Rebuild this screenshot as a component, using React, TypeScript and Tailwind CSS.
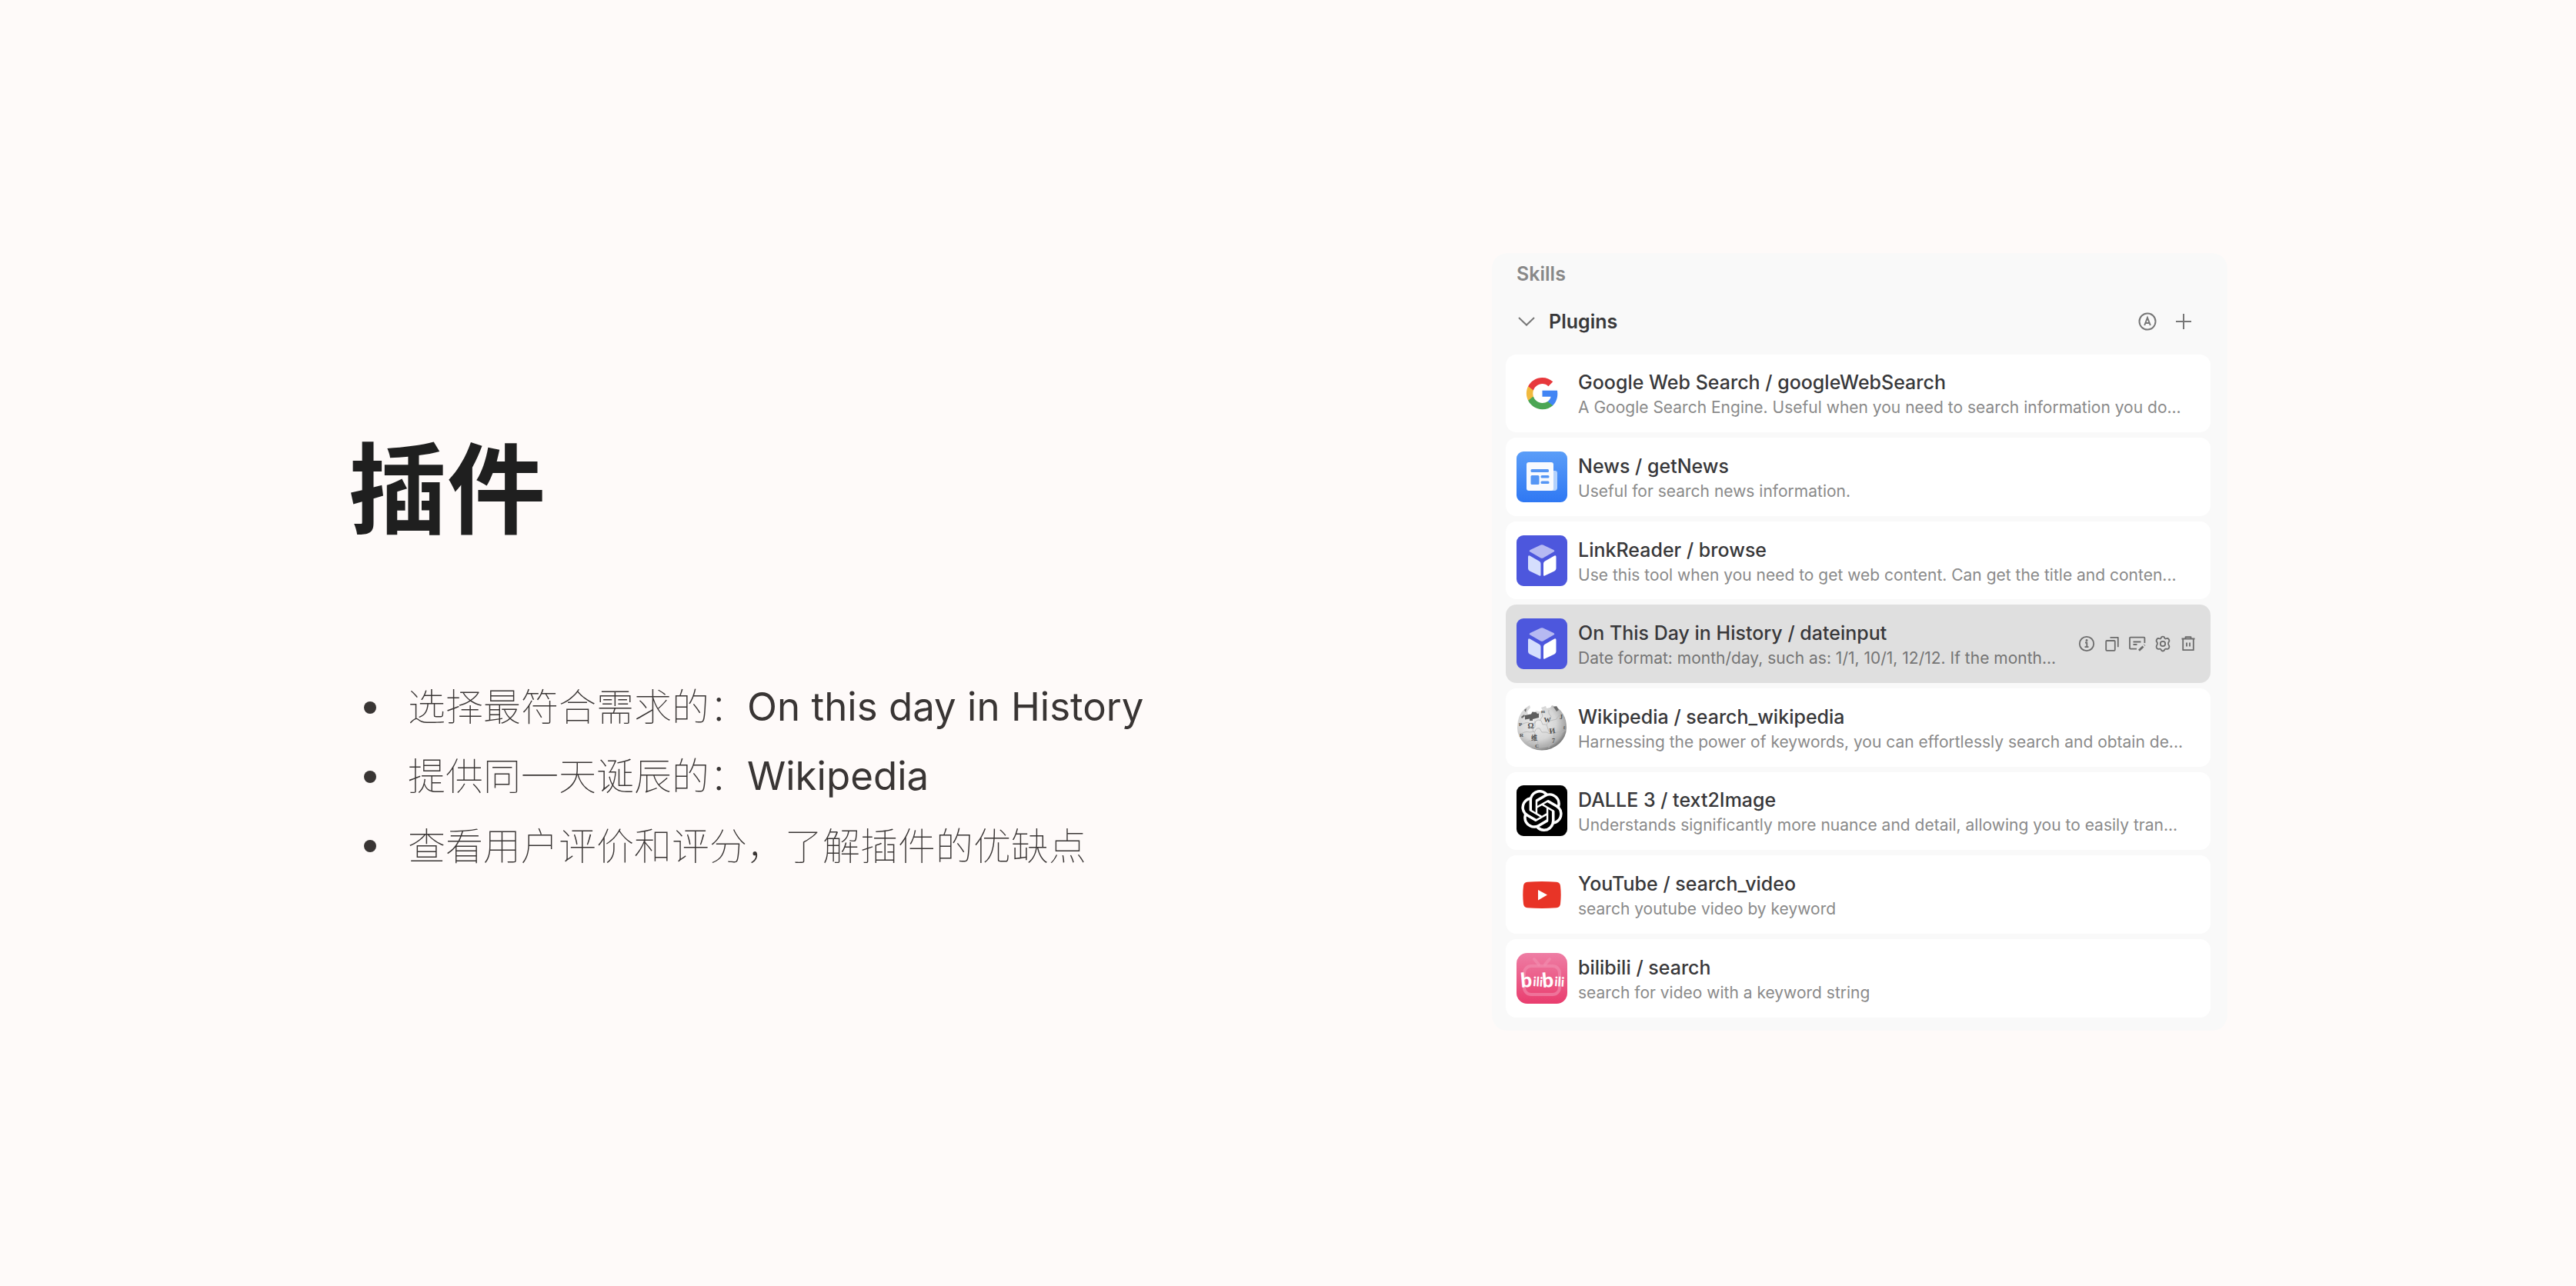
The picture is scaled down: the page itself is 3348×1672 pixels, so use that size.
import type { ReactNode } from 'react'
import { SiOpenai } from 'react-icons/si'

interface Plugin {
  name: string
  description: string
  icon: ReactNode
  active?: boolean
}

function GoogleIcon() {
  return (
    <svg viewBox="0 0 24 24" className="size-[45px]">
      <path fill="#4285F4" d="M22.56 12.25c0-.78-.07-1.53-.2-2.25H12v4.26h5.92c-.26 1.37-1.04 2.53-2.21 3.31v2.77h3.57c2.08-1.92 3.28-4.74 3.28-8.09z" />
      <path fill="#4BA654" d="M12 23c2.97 0 5.46-.98 7.28-2.66l-3.57-2.77c-.98.66-2.23 1.06-3.71 1.06-2.86 0-5.29-1.93-6.16-4.53H2.18v2.84C3.99 20.53 7.7 23 12 23z" />
      <path fill="#F1B93E" d="M5.84 14.09c-.22-.66-.35-1.36-.35-2.09s.13-1.43.35-2.09V7.07H2.18C1.43 8.55 1 10.22 1 12s.43 3.45 1.18 4.93l2.85-2.22.81-.62z" />
      <path fill="#E7383C" d="M12 5.38c1.62 0 3.06.56 4.21 1.64l3.15-3.15C17.45 2.09 14.97 1 12 1 7.7 1 3.99 3.47 2.18 7.07l3.66 2.84c.87-2.6 3.3-4.53 6.16-4.53z" />
    </svg>
  )
}

function NewsIcon() {
  return (
    <svg viewBox="0 0 66 66" className="size-full">
      <defs>
        <linearGradient id="news-bg" x1="0" y1="0" x2="0" y2="1">
          <stop offset="0" stopColor="#5A9DF8" />
          <stop offset="1" stopColor="#2F78F3" />
        </linearGradient>
      </defs>
      <rect width="66" height="66" rx="9" fill="url(#news-bg)" />
      <path d="M46 25h4a3 3 0 0 1 3 3v19a4 4 0 0 1-4 4h-5z" fill="#B4D2FC" />
      <rect x="13" y="14" width="35" height="37" rx="3" fill="#F8FAFE" />
      <g fill="#5596F5">
        <rect x="18.500" y="23" width="23.500" height="4" rx="1.500" />
        <rect x="18.500" y="31" width="11" height="12" rx="1.500" />
        <rect x="31.500" y="31" width="11" height="3.500" rx="1.500" />
        <rect x="31.500" y="38.500" width="11" height="3.500" rx="1.500" />
      </g>
    </svg>
  )
}

function CubeIcon() {
  return (
    <svg viewBox="0 0 66 66" className="size-full">
      <rect width="66" height="66" rx="9" fill="#4D57DD" />
      <path d="M31.500 12.600q1.500-.7 3 0l13.800 6.400q2 1.300 0 2.600l-13.800 7.800q-1.500.9-3 0l-13.800-7.800q-2-1.300 0-2.600z" fill="#B6B9F2" />
      <path d="M15 28q0-2.500 2.200-1.400l12.600 7.200q1.700 1 1.700 3v14.700q0 1.800-1.700 1.100l-12.600-6q-2.200-1.200-2.200-3.600z" fill="#D5DEFD" />
      <path d="M51.500 28q0-2.500-2.200-1.400l-12.600 7.200q-1.700 1-1.700 3v14.700q0 1.800 1.700 1.100l12.600-6q2.200-1.200 2.200-3.600z" fill="#fff" />
    </svg>
  )
}

function WikipediaIcon() {
  return (
    <svg viewBox="0 0 66 66" className="size-full">
      <defs>
        <radialGradient id="globe" cx=".4" cy=".38" r=".64">
          <stop offset="0" stopColor="#EDEDED" />
          <stop offset=".6" stopColor="#D6D6D6" />
          <stop offset=".88" stopColor="#ABABAB" />
          <stop offset="1" stopColor="#7A7A7A" />
        </radialGradient>
      </defs>
      <path
        d="M11 8l6-4 1 3-4 5 1 4 8-2 2-3 5 1 4-1-2-4 6-2 1 3 5-1 2-3q7 2 11.500 7Q65 19.500 65 33A32 29.500 0 0 1 1 33Q1 17 11 8z"
        fill="url(#globe)"
      />
      <path d="M11 17l8-1.500 1.500-3 5 .5 1.500 2 2-.5v5.500l-8 2v2h-4v-2.500l-6 1z" fill="#5E5E5E" />
      <g fill="none" stroke="#B4B4B4" strokeWidth=".8">
        <path d="M2 28q5 2 9-1 4-2 7 1l6-1q2-6 8-3l2 5q4-1 5 1M5 42q6-5 12-3l7-1q1-5 6-4l3 5q7-1 10 2M24 24v8q-6 4 0 8v6l4 5-2 8M42 10q-1 6 3 8l-2 7q-5 2-3 7l2 6q6-1 7 3l-1 9q-6 3-6 10M44 24l8-2q2-6 7-4M50 40q5-3 8 0l6-4M11 54l6-4q4 3 8 1M30 58l12-1 7-4M32 12l2 6-4 6" />
      </g>
      <g fill="#4F4F4F" fontFamily="Liberation Serif, serif" fontWeight="700">
        <text x="14.500" y="34" fontSize="10">Ω</text>
        <text x="35.500" y="26" fontSize="9">W</text>
        <text x="43" y="41" fontSize="10" transform="rotate(-8 43 41)">И</text>
        <text x="19" y="49" fontSize="8" fontFamily="Noto Sans CJK SC, sans-serif">维</text>
        <text x="46" y="53" fontSize="8">7</text>
        <text x="56" y="22" fontSize="8">J</text>
        <text x="3" y="31" fontSize="7">P</text>
        <text x="4" y="45" fontSize="7">R</text>
        <text x="24" y="59" fontSize="7">C</text>
        <text x="32" y="14" fontSize="6">m</text>
        <text x="61" y="35" fontSize="6">f</text>
      </g>
      <path d="M48 6l4-1 3 5-3 2zM10 10l3-2-1 5zM6 19l4-3 1 2-4 3z" fill="#6A6A6A" />
    </svg>
  )
}

function OpenAiIcon() {
  return (
    <span className="flex size-full items-center justify-center rounded-[9px] bg-black">
      <SiOpenai className="size-[54px] text-white" />
    </span>
  )
}

function YouTubeIcon() {
  return (
    <svg viewBox="0 0 50 35" className="h-[35px] w-[50px]">
      <path d="M6 .8Q25-.8 44 .8q4.500.5 5 5 1.400 11.700 0 23.400-.5 4.500-5 5-19 1.600-38 0-4.500-.5-5-5-1.400-11.700 0-23.400.5-4.500 5-5z" fill="#E83427" />
      <path d="M20 11l12 6.500L20 24.500z" fill="#fff" />
    </svg>
  )
}

function BilibiliIcon() {
  return (
    <svg viewBox="0 0 66 66" className="size-full">
      <defs>
        <linearGradient id="bili-bg" x1="0" y1="0" x2="0" y2="1">
          <stop offset="0" stopColor="#EE7DA4" />
          <stop offset="1" stopColor="#E93D6E" />
        </linearGradient>
      </defs>
      <rect width="66" height="66" rx="14" fill="url(#bili-bg)" />
      <g fill="none" stroke="#F28FB0" strokeOpacity=".6" strokeWidth="4" strokeLinecap="round">
        <rect x="10" y="17" width="46" height="37" rx="9" />
        <path d="M23 8l6 7M43 8l-6 7" />
      </g>
      <g fill="#fff" fontFamily="Lato, sans-serif">
        <text x="6" y="45" fontSize="26" fontWeight="900" transform="rotate(-5 6 45)">b</text>
        <text x="21" y="43" fontSize="17" fontWeight="700" transform="rotate(4 21 43)">ili</text>
        <text x="34" y="45" fontSize="26" fontWeight="900" transform="rotate(-5 34 45)">b</text>
        <text x="49" y="43" fontSize="17" fontWeight="700" transform="rotate(4 49 43)">ili</text>
      </g>
    </svg>
  )
}

const plugins: Plugin[] = [
  {
    name: 'Google Web Search / googleWebSearch',
    description: 'A Google Search Engine. Useful when you need to search information you do...',
    icon: <GoogleIcon />,
  },
  { name: 'News / getNews', description: 'Useful for search news information.', icon: <NewsIcon /> },
  {
    name: 'LinkReader / browse',
    description: 'Use this tool when you need to get web content. Can get the title and conten...',
    icon: <CubeIcon />,
  },
  {
    name: 'On This Day in History / dateinput',
    description: 'Date format: month/day, such as: 1/1, 10/1, 12/12. If the month...',
    icon: <CubeIcon />,
    active: true,
  },
  {
    name: 'Wikipedia / search_wikipedia',
    description: 'Harnessing the power of keywords, you can effortlessly search and obtain de...',
    icon: <WikipediaIcon />,
  },
  {
    name: 'DALLE 3 / text2Image',
    description: 'Understands significantly more nuance and detail, allowing you to easily tran...',
    icon: <OpenAiIcon />,
  },
  { name: 'YouTube / search_video', description: 'search youtube video by keyword', icon: <YouTubeIcon /> },
  { name: 'bilibili / search', description: 'search for video with a keyword string', icon: <BilibiliIcon /> },
]

const points = [
  { text: '选择最符合需求的：', value: 'On this day in History' },
  { text: '提供同一天诞辰的：', value: 'Wikipedia' },
  { text: '查看用户评价和评分，了解插件的优缺点' },
]

const actions: { label: string; icon: ReactNode }[] = [
  {
    label: 'Info',
    icon: (
      <>
        <circle cx="11" cy="11" r="9.200" />
        <path d="M9 9.500h2.300v5.500M8.500 15.200h5" />
        <circle cx="11" cy="6.600" r=".6" fill="currentColor" />
      </>
    ),
  },
  {
    label: 'Copy',
    icon: (
      <>
        <rect x="3.200" y="7" width="11.600" height="12.800" rx="1" />
        <path d="M8.500 2.800h10.300v12.400" />
      </>
    ),
  },
  {
    label: 'Edit',
    icon: (
      <>
        <path d="M20.400 10V3.600a1 1 0 0 0-1-1H2a1 1 0 0 0-1 1v13a1 1 0 0 0 1 1h8M5.500 8.500h10M5.500 12h5" />
        <path d="M13 19.800l5.500-5.300M20 13l.4-.4" strokeWidth="2.800" />
      </>
    ),
  },
  {
    label: 'Settings',
    icon: (
      <>
        <path d="M8.700 3.600Q9 1.600 11 1.600t2.300 2q.7 1.400 2.200.7 1.900-.9 3.100.6 1.500 2.100.3 3.400-1 1.200-.8 2.700.1 1.400 1 2.400 1 1.600-.4 3.500-1.300 1.500-3.200.8-1.600-.5-2.200 1-.5 1.800-2.300 1.800t-2.300-1.800q-.6-1.500-2.200-1-1.900.7-3.200-.8-1.400-1.900-.4-3.500.9-1 1-2.400.2-1.500-.8-2.700-1.200-1.300.3-3.400 1.200-1.500 3.100-.6 1.500.7 2.200-.7z" />
        <circle cx="11" cy="11" r="3.200" />
      </>
    ),
  },
  {
    label: 'Delete',
    icon: (
      <>
        <path d="M2.500 4.500h17M7.500 4V2.200h7V4M4.200 5v14.200h13.600V5M9 9.500v5M13 9.500v5" />
      </>
    ),
  },
]

function PluginRow({ plugin }: { plugin: Plugin }) {
  return (
    <li
      className={`flex items-center gap-[14px] rounded-[14px] px-[14px] ${
        plugin.active ? 'bg-[#dfdfdf]' : 'bg-white'
      }`}
    >
      <div className="flex size-[66px] shrink-0 items-center justify-center">{plugin.icon}</div>
      <div className="min-w-0 flex-1 pt-1 whitespace-nowrap">
        <h3 className="text-[25px] leading-[34px] font-medium text-[#38383a]">{plugin.name}</h3>
        <p className={`text-[21px] leading-8 ${plugin.active ? 'text-[#757575]' : 'text-[#8a8a8a]'}`}>
          {plugin.description}
        </p>
      </div>
      {plugin.active && (
        <div className="flex gap-[11px] pr-1 text-[#6c6c6c]">
          {actions.map((action) => (
            <button key={action.label} type="button" aria-label={action.label}>
              <svg
                viewBox="0 0 22 22"
                className="size-[22px]"
                fill="none"
                stroke="currentColor"
                strokeWidth="1.800"
                strokeLinejoin="round"
              >
                {action.icon}
              </svg>
            </button>
          ))}
        </div>
      )}
    </li>
  )
}

export default function App() {
  return (
    <main className="flex min-h-screen items-center justify-between bg-[#fefaf9] px-[13.53%] pb-1 font-['Inter','Noto_Sans_CJK_SC',sans-serif]">
      <section className="pt-8">
        <h1 className="text-[128px] leading-[160px] font-semibold text-[#1f1f1f]">插件</h1>
        <ul className="mt-[154px] leading-[90px] text-[#393534]">
          {points.map((point) => (
            <li key={point.text} className="flex h-[90px] items-center">
              <span className="mt-[6px] mr-[41px] ml-5 size-4 rounded-full bg-[#393534]" />
              <p className="flex items-baseline">
                <span className="font-['Noto_Sans_CJK_SC',sans-serif] text-[49px] font-thin">{point.text}</span>
                {point.value && <span className="text-[51px]">{point.value}</span>}
              </p>
            </li>
          ))}
        </ul>
      </section>

      <section className="w-[956px] rounded-[20px] bg-[#f9f9f9] pt-2 pr-[22px] pb-[17px] pl-[18px]">
        <h2 className="pl-[14px] text-[25px] leading-[38px] font-semibold text-[#888888]">Skills</h2>
        <div className="flex h-[86px] items-center pr-[22px] pl-[14px]">
          <button type="button" className="flex items-center gap-4 text-[#38383a]">
            <svg viewBox="0 0 26 26" className="size-[26px] text-[#777]" fill="none" stroke="currentColor" strokeWidth="2">
              <path d="M3 8l10 9.500L23 8" />
            </svg>
            <span className="text-[25px] leading-8 font-semibold">Plugins</span>
          </button>
          <div className="ml-auto flex items-center gap-[21px] text-[#777]">
            <button type="button" aria-label="Auto">
              <svg viewBox="0 0 26 26" className="size-[26px]" fill="none" stroke="currentColor" strokeWidth="2">
                <circle cx="13" cy="13" r="10.500" />
                <path d="M9.200 18L13 8l3.800 10M10.500 15h5" />
              </svg>
            </button>
            <button type="button" aria-label="Add plugin">
              <svg viewBox="0 0 26 26" className="size-[26px]" fill="none" stroke="currentColor" strokeWidth="2">
                <path d="M13 3v20M3 13h20" />
              </svg>
            </button>
          </div>
        </div>
        <ul className="grid min-h-[862px] auto-rows-fr gap-[7px]">
          {plugins.map((plugin) => (
            <PluginRow key={plugin.name} plugin={plugin} />
          ))}
        </ul>
      </section>
    </main>
  )
}
